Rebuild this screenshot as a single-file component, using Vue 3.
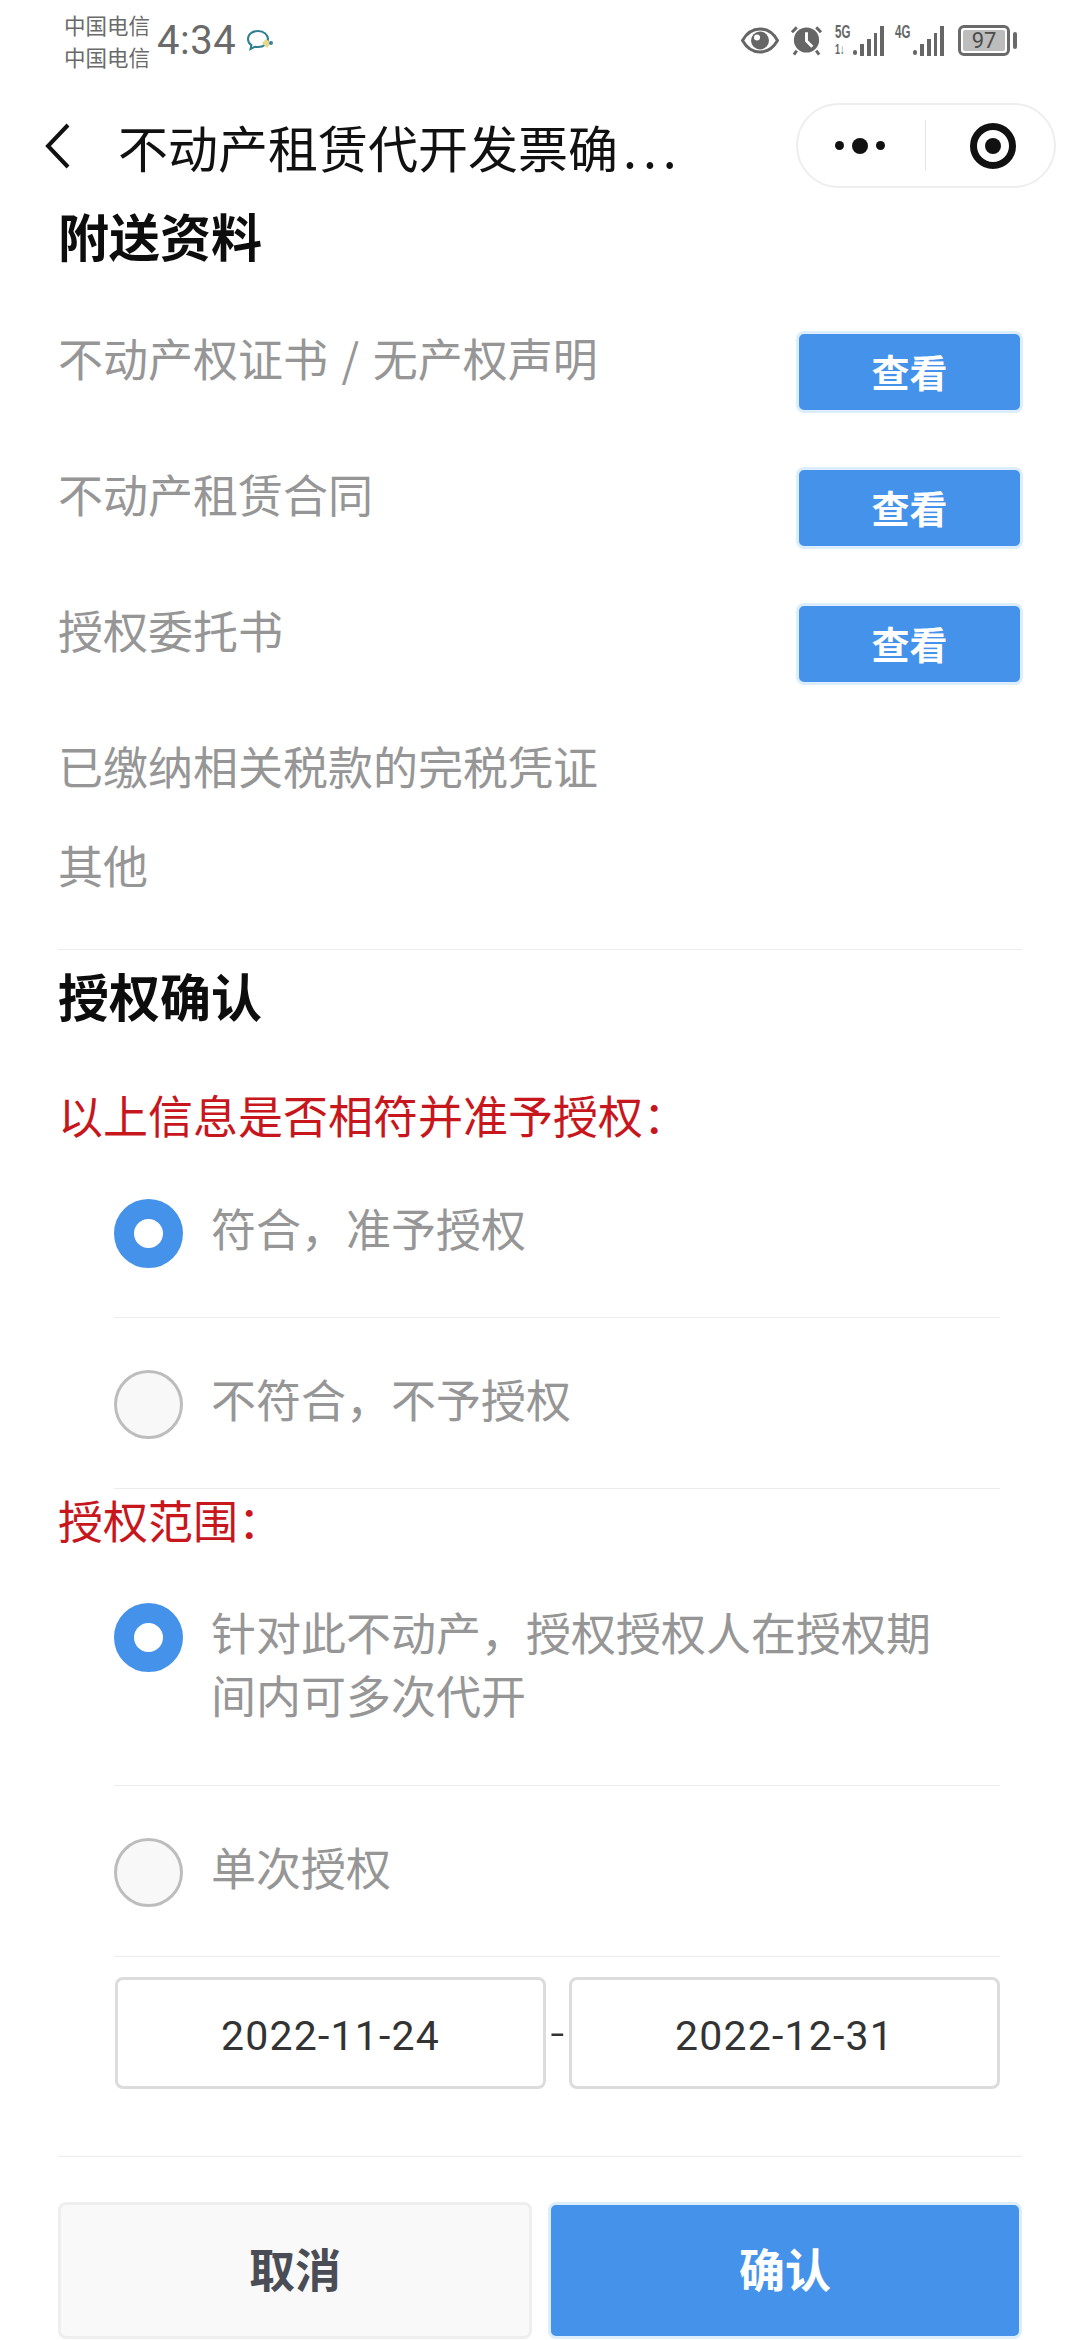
<script setup>
const docs = [
  { label: '不动产权证书 / 无产权声明', view: true },
  { label: '不动产租赁合同', view: true },
  { label: '授权委托书', view: true },
  { label: '已缴纳相关税款的完税凭证', view: false, tight: true },
  { label: '其他', view: false }
]
</script>

<template>
  <div class="page">
    <header class="status">
      <div class="carriers"><span>中国电信</span><span>中国电信</span></div>
      <span class="time">4:34</span>
      <svg class="chat" width="28" height="24" viewBox="0 0 28 24" fill="none">
        <path d="M12 2C6 2 2 5.500 2 10c0 2.600 1.300 4.800 3.400 6.200L4.500 20l4.500-2.300c1 .3 2 .4 3 .4 5.800 0 10-3.600 10-8S18 2 12 2z" stroke="#2f7f8f" stroke-width="2"/>
        <path d="M16 14l4-4 5 4-4 5z" fill="#e4d98d"/>
        <circle cx="25" cy="14" r="2" fill="#3a7f9f"/>
      </svg>
      <div class="status-right">
        <svg class="i-eye" width="38" height="27" viewBox="0 0 38 27">
          <path d="M1.500 13.500C6 5.500 12 2 19 2s13 3.500 17.500 11.500C32 21.500 26 25 19 25S6 21.500 1.500 13.500z" fill="none" stroke="#666" stroke-width="3"/>
          <circle cx="19" cy="13.500" r="9" fill="#666"/>
          <circle cx="16" cy="10.500" r="3" fill="#fff"/>
        </svg>
        <svg class="i-alarm" width="33" height="32" viewBox="0 0 34 32">
          <circle cx="17" cy="16" r="13" fill="#666"/>
          <path d="M17 8v9l6 6" fill="none" stroke="#fff" stroke-width="3"/>
          <path d="M2 8l5-5M32 8l-5-5M7 27l-3 4M27 27l3 4" stroke="#666" stroke-width="3"/>
        </svg>
        <div class="sig s5">
          <div class="net-col">
            <span class="net">5G</span>
            <span class="net low">1↓</span>
          </div>
          <svg class="bars" width="32" height="31" viewBox="18 0 32 31">
            <rect x="18" y="25" width="4" height="5" rx="2" fill="#666"/>
            <rect x="25" y="19" width="4" height="12" fill="#666"/>
            <rect x="32" y="14" width="4" height="17" fill="#666"/>
            <rect x="39" y="8" width="3" height="23" fill="#666"/>
            <rect x="45" y="1" width="4" height="30" fill="#666"/>
          </svg>
        </div>
        <div class="sig s4">
          <div class="net-col">
            <span class="net">4G</span>
          </div>
          <svg class="bars" width="32" height="31" viewBox="18 0 32 31">
            <rect x="18" y="25" width="4" height="5" rx="2" fill="#666"/>
            <rect x="25" y="19" width="4" height="12" fill="#666"/>
            <rect x="32" y="14" width="4" height="17" fill="#666"/>
            <rect x="39" y="8" width="3" height="23" fill="#666"/>
            <rect x="45" y="1" width="4" height="30" fill="#666"/>
          </svg>
        </div>
        <div class="battery"><span class="batt-fill">97</span></div>
        <span class="nub"></span>
      </div>
    </header>

    <nav class="nav">
      <svg class="back" width="26" height="46" viewBox="0 0 26 46" fill="none">
        <path d="M23 2L3 23l20 21" stroke="#111" stroke-width="4"/>
      </svg>
      <div class="title">不动产租赁代开发票确<span class="ell">...</span></div>
      <div class="capsule">
        <div class="more"><i class="d"></i><i class="d big"></i><i class="d"></i></div>
        <span class="cap-div"></span>
        <div class="target"><i></i></div>
      </div>
    </nav>

    <main class="body">
      <h2 class="sec first">附送资料</h2>
      <div class="docs">
        <div v-for="d in docs" :key="d.label" class="doc" :class="{ 'has-btn': d.view, tight: d.tight }">
          <span class="doc-label">{{ d.label }}</span>
          <button v-if="d.view" class="view">查看</button>
        </div>
      </div>
      <div class="rule"></div>

      <h2 class="sec second">授权确认</h2>
      <div class="red q1">以上信息是否相符并准予授权：</div>
      <div class="group g1">
        <div class="item"><span class="radio on"></span><span class="txt">符合，准予授权</span></div>
        <div class="item"><span class="radio"></span><span class="txt">不符合，不予授权</span></div>
      </div>
      <div class="red q2">授权范围：</div>
      <div class="group g2">
        <div class="item long"><span class="radio on"></span><span class="txt">针对此不动产，授权授权人在授权期间内可多次代开</span></div>
        <div class="item"><span class="radio"></span><span class="txt">单次授权</span></div>
      </div>
      <div class="dates">
        <div class="date">2022-11-24</div>
        <span class="dash">-</span>
        <div class="date">2022-12-31</div>
      </div>
      <div class="rule r2"></div>
      <div class="actions">
        <button class="cancel">取消</button>
        <button class="confirm">确认</button>
      </div>
    </main>
  </div>
</template>

<style>
html, body { margin: 0; background: #fff; }
</style>

<style scoped>
.page {
  width: 1080px;
  height: 2340px;
  overflow: hidden;
  background: #fff;
  font-family: "Noto Sans CJK SC", "Noto Sans", sans-serif;
}
.status {
  height: 90px;
  box-sizing: border-box;
  padding: 9px 0 0 64px;
  display: flex;
  align-items: flex-start;
  color: #6a6a6a;
}
.carriers {
  display: flex;
  flex-direction: column;
  font-size: 21.500px;
  line-height: 32px;
  width: 93px;
}
.time {
  font-family: Roboto, sans-serif;
  font-size: 40px;
  line-height: 64px;
  width: 89px;
  letter-spacing: 0.5px;
}
.chat { margin-top: 20px; }
.status-right {
  margin-left: auto;
  margin-top: 15px;
  padding-right: 63px;
  display: flex;
  align-items: center;
}
.i-eye { margin-right: 11px; }
.i-alarm { margin-right: 12px; }
.sig {
  width: 50px;
  height: 31px;
  display: flex;
  justify-content: space-between;
}
.s5 { margin-right: 10px; }
.s4 { margin-right: 13px; }
.net-col {
  width: 16px;
  display: flex;
  flex-direction: column;
  gap: 3px;
}
.net {
  display: block;
  width: 24px;
  font-family: "Liberation Sans", sans-serif;
  font-size: 18px;
  line-height: 14px;
  font-weight: 700;
  white-space: nowrap;
  color: #666;
  transform: scaleX(0.64);
  transform-origin: left center;
}
.net.low { font-size: 14px; }
.battery {
  width: 52px;
  height: 31px;
  box-sizing: border-box;
  border: 3px solid #6a6a6a;
  border-radius: 6px;
  padding: 2px;
  display: flex;
}
.batt-fill {
  flex: 1;
  background: #bdbdbd;
  color: #4c4c4c;
  font-family: Roboto, sans-serif;
  font-size: 22px;
  line-height: 21px;
  text-align: center;
  border-radius: 2px;
}
.nub {
  width: 4px;
  height: 17px;
  margin-left: 3px;
  background: #6a6a6a;
  border-radius: 2px;
}
.nav {
  height: 110px;
  position: relative;
  display: flex;
  align-items: center;
  padding-left: 45px;
}
.back { margin-right: 47px; flex: none; margin-top: 2px; }
.title {
  font-size: 50px;
  line-height: 70px;
  color: #111;
  white-space: nowrap;
  flex: none;
  margin-top: 2px;
}
.ell { letter-spacing: 6px; margin-left: 5px; }
.capsule {
  position: absolute;
  left: 796px;
  top: 13px;
  width: 260px;
  height: 85px;
  box-sizing: border-box;
  border: 2px solid #eeeeee;
  border-radius: 43px;
  display: flex;
  align-items: center;
}
.more {
  width: 127px;
  display: flex;
  align-items: center;
  justify-content: center;
  gap: 8px;
  padding-right: 3px;
  box-sizing: border-box;
}
.d { width: 9px; height: 9px; border-radius: 50%; background: #111; }
.d.big { width: 16px; height: 16px; }
.cap-div { width: 1px; height: 51px; background: #e6e6e6; }
.target {
  margin-left: 44px;
  width: 46px;
  height: 46px;
  box-sizing: border-box;
  border: 7px solid #111;
  border-radius: 50%;
  display: flex;
  align-items: center;
  justify-content: center;
}
.target i { width: 16px; height: 16px; border-radius: 50%; background: #111; }
.body { padding: 0 58px; }
.sec {
  margin: 0;
  font-size: 51px;
  font-weight: 700;
  line-height: 70px;
  color: #0d0d0d;
}
.sec.first { margin-top: 0; }
.sec.second { margin-top: 10px; margin-bottom: 1px; }
.docs { margin-top: 61px; }
.doc {
  display: flex;
  justify-content: space-between;
  align-items: flex-start;
  margin-bottom: 40px;
}
.doc.has-btn { margin-bottom: 54px; }
.doc.tight { margin-bottom: 39px; }
.doc-label {
  font-size: 45px;
  line-height: 60px;
  color: #969696;
  word-spacing: 3.500px;
  margin: -3px 0 3px;
}
.view {
  width: 227px;
  height: 82px;
  box-sizing: border-box;
  margin: 0 -1px 0 0;
  padding: 0 0 2px;
  border: 3px solid #dcedfd;
  border-radius: 8px;
  background: #4592ea;
  color: #fff;
  font: 700 38px/1 "Noto Sans CJK SC", sans-serif;
}
.rule { height: 1px; background: #ececec; margin-top: 51px; }
.red {
  font-size: 45px;
  line-height: 60px;
  color: #c8161d;
}
.q1 { margin-top: 55px; }
.q2 { margin-top: 1px; }
.group { margin: 0 22px 0 56px; }
.g1 { margin-top: 2px; }
.g2 { margin-top: 1px; }
.item {
  display: flex;
  align-items: flex-start;
  padding: 51px 0 49px;
  border-bottom: 1px solid #ececec;
  min-height: 70px;
}
.item.long { padding-bottom: 57px; }
.radio {
  flex: none;
  width: 69px;
  height: 69px;
  margin-top: 1px;
  box-sizing: border-box;
  border: 3px solid #bdbdbd;
  border-radius: 50%;
  background: #f8f8f8;
}
.radio.on {
  border: 20px solid #4592ea;
  background: #fff;
}
.txt {
  margin: -2px 0 2px 28px;
  max-width: 730px;
  font-size: 45px;
  line-height: 63px;
  color: #969696;
}
.dates {
  display: flex;
  align-items: center;
  margin: 20px 22px 0 57px;
}
.date {
  flex: 1;
  height: 112px;
  box-sizing: border-box;
  border: 3px solid #dcdcdc;
  border-radius: 8px;
  padding-top: 5px;
  display: flex;
  align-items: center;
  justify-content: center;
  font-family: Roboto, sans-serif;
  font-size: 41px;
  letter-spacing: 1.200px;
  color: #333;
  background: #fff;
}
.dash {
  width: 23px;
  text-align: center;
  font-family: Roboto, sans-serif;
  font-size: 50px;
  font-weight: 300;
  line-height: 40px;
  color: #333;
  flex: none;
}
.rule.r2 { margin-top: 67px; }
.actions {
  display: flex;
  gap: 16px;
  margin-top: 45px;
}
.actions button {
  flex: 1;
  height: 137px;
  box-sizing: border-box;
  padding: 0 0 7px;
  border-radius: 8px;
  font: 700 46px/1 "Noto Sans CJK SC", sans-serif;
}
.cancel {
  border: 3px solid #eeeeee;
  background: #f9f9f9;
  color: #4a4d55;
}
.confirm {
  border: 3px solid #dcedfd;
  background: #4592ea;
  color: #fff;
}
</style>
